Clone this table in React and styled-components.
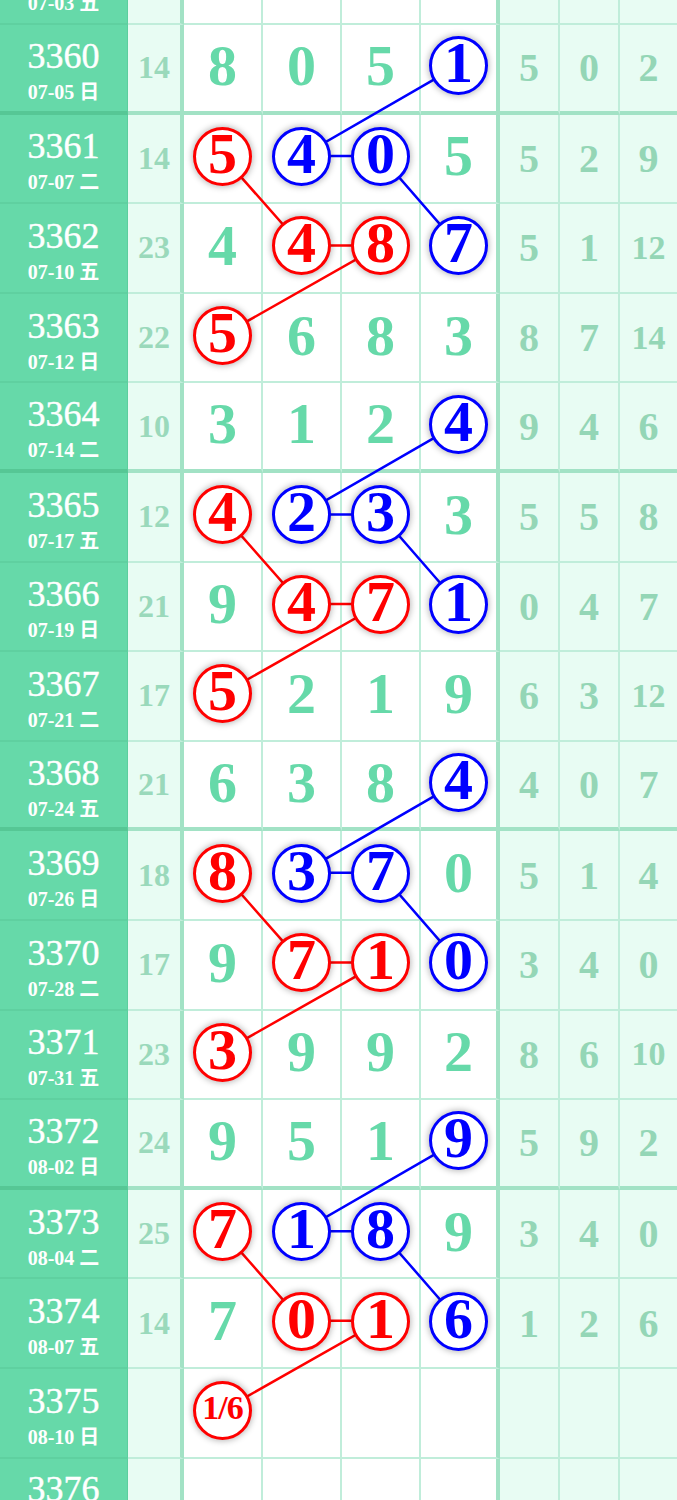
import React from "react";
import styled, { createGlobalStyle, css } from "styled-components";

const H = 89.6;
const COLS = [128, 56, 79, 79, 79, 79, 60, 60, 57];
const DIGIT_LEFT = 184;
const DIGIT_W = 79;

const GlobalStyle = createGlobalStyle`
  html, body { margin: 0; padding: 0; background: #fff; }
  body { overflow: hidden; }
`;

const rows = [
  { no: 3359, date: "07-03 五", sum: 16, d: [3, 6, 2, 5], r: [4, 8, 3] },
  { no: 3360, date: "07-05 日", sum: 14, d: [8, 0, 5, 1], r: [5, 0, 2], m: "___b" },
  { no: 3361, date: "07-07 二", sum: 14, d: [5, 4, 0, 5], r: [5, 2, 9], m: "rbb_" },
  { no: 3362, date: "07-10 五", sum: 23, d: [4, 4, 8, 7], r: [5, 1, 12], m: "_rrb" },
  { no: 3363, date: "07-12 日", sum: 22, d: [5, 6, 8, 3], r: [8, 7, 14], m: "r___" },
  { no: 3364, date: "07-14 二", sum: 10, d: [3, 1, 2, 4], r: [9, 4, 6], m: "___b" },
  { no: 3365, date: "07-17 五", sum: 12, d: [4, 2, 3, 3], r: [5, 5, 8], m: "rbb_" },
  { no: 3366, date: "07-19 日", sum: 21, d: [9, 4, 7, 1], r: [0, 4, 7], m: "_rrb" },
  { no: 3367, date: "07-21 二", sum: 17, d: [5, 2, 1, 9], r: [6, 3, 12], m: "r___" },
  { no: 3368, date: "07-24 五", sum: 21, d: [6, 3, 8, 4], r: [4, 0, 7], m: "___b" },
  { no: 3369, date: "07-26 日", sum: 18, d: [8, 3, 7, 0], r: [5, 1, 4], m: "rbb_" },
  { no: 3370, date: "07-28 二", sum: 17, d: [9, 7, 1, 0], r: [3, 4, 0], m: "_rrb" },
  { no: 3371, date: "07-31 五", sum: 23, d: [3, 9, 9, 2], r: [8, 6, 10], m: "r___" },
  { no: 3372, date: "08-02 日", sum: 24, d: [9, 5, 1, 9], r: [5, 9, 2], m: "___b" },
  { no: 3373, date: "08-04 二", sum: 25, d: [7, 1, 8, 9], r: [3, 4, 0], m: "rbb_" },
  { no: 3374, date: "08-07 五", sum: 14, d: [7, 0, 1, 6], r: [1, 2, 6], m: "_rrb" },
  { no: 3375, date: "08-10 日", sum: "", d: ["1/6", "", "", ""], r: ["", "", ""], m: "r___" },
  { no: 3376, date: "08-12 二", sum: "", d: ["", "", "", ""], r: ["", "", ""] },
];

const isThick = (no) => (no - 3360) % 4 === 0;

const rowCenter = (i) => {
  const bw = isThick(rows[i].no) ? 4 : 2;
  return i * H + (H - bw - 4) / 2;
};
const colCenter = (c) => DIGIT_LEFT + c * DIGIT_W + (c === 3 ? 37.5 : 38.5);

// blue and red zig-zags repeat in blocks of four draws
const segments = [];
[1, 5, 9, 13].forEach((k) => {
  segments.push({ color: "#0000ff", pts: [[k, 3], [k + 1, 1], [k + 1, 2], [k + 2, 3]] });
  segments.push({ color: "#ff0000", pts: [[k + 1, 0], [k + 2, 1], [k + 2, 2], [k + 3, 0]] });
});

const Page = styled.div`
  height: 100vh;
  overflow: hidden;
  font-family: "Liberation Serif", "Noto Sans CJK SC", serif;
`;

const Table = styled.div`
  position: relative;
  margin-top: ${-(H - 25)}px;
`;

const Row = styled.div`
  display: grid;
  grid-template-columns: ${COLS.map((w) => w + "px").join(" ")};
  height: ${H}px;
`;

const lineColor = (thick) => (thick ? "#a2e2c5" : "#c0eddA");

const cellBase = css`
  box-sizing: border-box;
  display: flex;
  align-items: center;
  justify-content: center;
  border-bottom: ${(p) => (p.$thick ? 4 : 2)}px solid ${(p) => lineColor(p.$thick)};
`;

const IssueCell = styled.div`
  ${cellBase};
  flex-direction: column;
  background: #66d9a9;
  color: #fff;
  border-right: 1px solid #5cce9e;
  border-bottom-color: ${(p) => (p.$thick ? "#56c795" : "#5fd0a0")};
  padding-top: 6px;
`;

const IssueNo = styled.div`
  font-size: 36px;
  line-height: 36px;
  -webkit-text-stroke: 0.4px #fff;
`;

const IssueDate = styled.div`
  font-size: 20px;
  line-height: 24px;
  font-weight: 700;
  margin-top: 6px;
`;

const SumCell = styled.div`
  ${cellBase};
  background: #e8fcf3;
  border-right: 4px solid #a2e2c5;
  color: #9ad9bb;
  font-size: 32px;
  font-weight: 700;
`;

const DigitCell = styled.div`
  ${cellBase};
  background: #fff;
  border-right: ${(p) => (p.$last ? "4px solid #a2e2c5" : "2px solid #c0edda")};
  padding-bottom: 4px;
  color: #66d9a9;
  font-size: 58px;
  font-weight: 700;
  line-height: 1;
`;

const RightCell = styled.div`
  ${cellBase};
  background: #e8fcf3;
  border-right: ${(p) => (p.$last ? "none" : "2px solid #c0edda")};
  color: #94d6b6;
  font-size: ${(p) => (p.$wide ? 34 : 40)}px;
  font-weight: 700;
`;

const Ball = styled.div`
  position: relative;
  z-index: 2;
  box-sizing: border-box;
  width: 59px;
  height: 59px;
  border-radius: 50%;
  border: 3px solid ${(p) => p.$color};
  background: #fff;
  color: ${(p) => p.$color};
  box-shadow: 0 0 6px 1px rgba(0, 0, 0, 0.28);
  display: flex;
  align-items: center;
  justify-content: center;
  padding-bottom: 5px;
  font-size: ${(p) => (p.$small ? 34 : 58)}px;
  letter-spacing: ${(p) => (p.$small ? "-1px" : "0")};
  line-height: 1;
`;

const Lines = styled.svg`
  position: absolute;
  left: 0;
  top: 0;
  z-index: 1;
  pointer-events: none;
`;

function App() {
  const total = rows.length * H;
  return (
    <Page>
      <GlobalStyle />
      <Table>
        {rows.map((row) => {
          const thick = isThick(row.no);
          return (
            <Row key={row.no}>
              <IssueCell $thick={thick}>
                <IssueNo>{row.no}</IssueNo>
                <IssueDate>{row.date}</IssueDate>
              </IssueCell>
              <SumCell $thick={thick}>{row.sum}</SumCell>
              {row.d.map((v, c) => {
                const mark = row.m ? row.m[c] : "_";
                return (
                  <DigitCell key={c} $thick={thick} $last={c === 3}>
                    {mark === "_" ? (
                      v
                    ) : (
                      <Ball
                        $color={mark === "r" ? "#ff0000" : "#0000ff"}
                        $small={String(v).length > 1}
                      >
                        {v}
                      </Ball>
                    )}
                  </DigitCell>
                );
              })}
              {row.r.map((v, c) => (
                <RightCell
                  key={c}
                  $thick={thick}
                  $last={c === 2}
                  $wide={String(v).length > 1}
                >
                  {v}
                </RightCell>
              ))}
            </Row>
          );
        })}
        <Lines width="677" height={total} viewBox={`0 0 677 ${total}`}>
          {segments.map((s, i) => (
            <polyline
              key={i}
              fill="none"
              stroke={s.color}
              strokeWidth="2.5"
              points={s.pts.map(([r, c]) => `${colCenter(c)},${rowCenter(r)}`).join(" ")}
            />
          ))}
        </Lines>
      </Table>
    </Page>
  );
}

export default App;
